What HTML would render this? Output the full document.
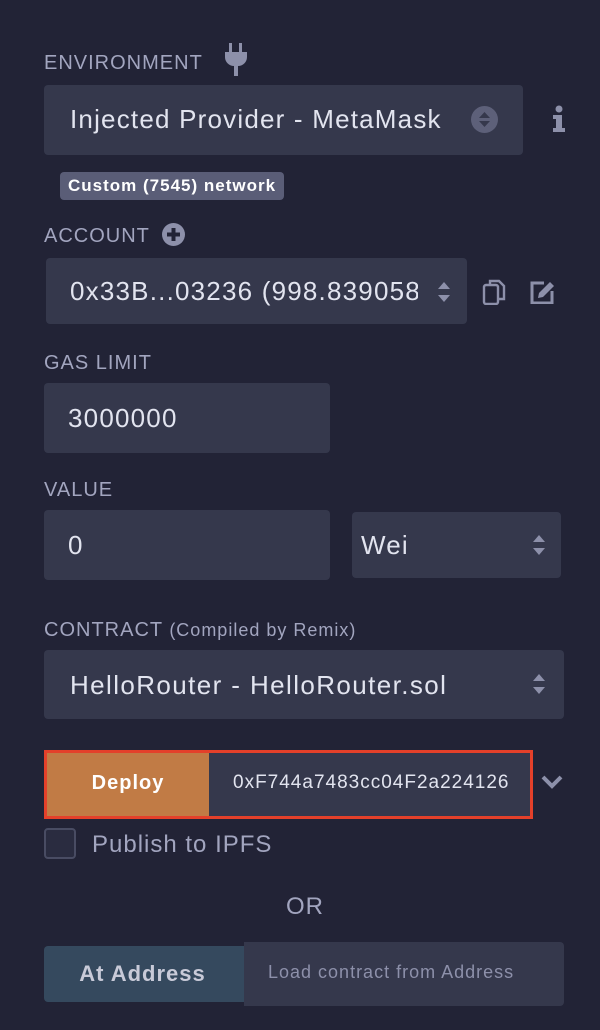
<!DOCTYPE html>
<html><head><style>
*{box-sizing:border-box;margin:0;padding:0}
body{width:600px;height:1030px;background:#222336;font-family:"Liberation Sans",sans-serif;position:relative;overflow:hidden;letter-spacing:1px}
.a{position:absolute}
.lbl{color:#a2a5bf;font-size:20px;}
.box{background:#35384c;border-radius:4px;color:#e2e4ef}
.txt{font-size:26px;color:#e2e4ef;letter-spacing:1.2px}
</style></head><body>
<div class="a lbl" style="left:44px;top:52px">ENVIRONMENT</div>
<svg class="a" style="left:224px;top:43px" width="24" height="33" viewBox="0 0 24 33"><rect x="5" y="0" width="3" height="10" fill="#8d90aa"/><rect x="15" y="0" width="3" height="10" fill="#8d90aa"/><path d="M1 9h22v5a9 9 0 0 1-9 9h-4a9 9 0 0 1-9-9z" fill="#8d90aa"/><rect x="10" y="22" width="4" height="11" fill="#8d90aa"/></svg>
<div class="a box" style="left:44px;top:85px;width:479px;height:70px"></div>
<div class="a txt" style="left:70px;top:104px">Injected Provider - MetaMask</div>
<svg class="a" style="left:471px;top:106px" width="27" height="27" viewBox="0 0 27 27"><circle cx="13.5" cy="13.5" r="13.5" fill="#5d6079"/><path d="M8 12l5.5-6 5.5 6zM8 15l5.5 6 5.5-6z" fill="#35384c"/></svg>
<svg class="a" style="left:552px;top:105px" width="14" height="27" viewBox="0 0 14 27"><circle cx="7" cy="4" r="3.5" fill="#8d90aa"/><path d="M1 10h9v13h3v4H1v-4h3v-9H1z" fill="#8d90aa"/></svg>
<div class="a" style="left:60px;top:172px;width:224px;height:28px;background:#5a5d77;border-radius:4px;color:#fff;font-weight:bold;font-size:17px;line-height:28px;padding-left:8px;white-space:nowrap">Custom (7545) network</div>
<div class="a lbl" style="left:44px;top:225px">ACCOUNT</div>
<svg class="a" style="left:162px;top:223px" width="23" height="23" viewBox="0 0 23 23"><circle cx="11.5" cy="11.5" r="11.5" fill="#8d90aa"/><path d="M9.5 5h4v4.5H18v4h-4.5V18h-4v-4.5H5v-4h4.5z" fill="#222336"/></svg>
<div class="a box" style="left:46px;top:258px;width:421px;height:66px;overflow:hidden"><div class="txt" style="position:absolute;left:24px;top:18px;white-space:nowrap;width:348px;overflow:hidden">0x33B...03236 (998.839058</div></div>
<svg class="a" style="left:437px;top:280px" width="14" height="24" viewBox="0 0 14 24"><path d="M1 9l6-7 6 7zM1 15l6 7 6-7z" fill="#8d90aa"/></svg>
<svg class="a" style="left:482px;top:279px" width="24" height="26" viewBox="0 0 24 26" fill="none" stroke="#8d90aa" stroke-width="2.4"><path d="M8 6V2h9l5 5v13h-6"/><rect x="2" y="6" width="14" height="19" rx="2"/></svg>
<svg class="a" style="left:529px;top:279px" width="28" height="25" viewBox="0 0 28 25"><path d="M15 4H3v20h20V12" fill="none" stroke="#8d90aa" stroke-width="3"/><path d="M10 14l11-11 4 4-11 11-5 1z" fill="#8d90aa"/></svg>
<div class="a lbl" style="left:44px;top:352px">GAS LIMIT</div>
<div class="a box" style="left:44px;top:383px;width:286px;height:70px"></div>
<div class="a txt" style="left:68px;top:403px">3000000</div>
<div class="a lbl" style="left:44px;top:479px">VALUE</div>
<div class="a box" style="left:44px;top:510px;width:286px;height:70px"></div>
<div class="a txt" style="left:68px;top:530px">0</div>
<div class="a box" style="left:352px;top:512px;width:209px;height:66px"></div>
<div class="a txt" style="left:361px;top:530px">Wei</div>
<svg class="a" style="left:532px;top:533px" width="14" height="24" viewBox="0 0 14 24"><path d="M1 9l6-7 6 7zM1 15l6 7 6-7z" fill="#8d90aa"/></svg>
<div class="a lbl" style="left:44px;top:619px">CONTRACT <span style="font-size:18px">(Compiled by Remix)</span></div>
<div class="a box" style="left:44px;top:650px;width:520px;height:69px"></div>
<div class="a txt" style="left:70px;top:670px;letter-spacing:1.4px">HelloRouter - HelloRouter.sol</div>
<svg class="a" style="left:532px;top:672px" width="14" height="24" viewBox="0 0 14 24"><path d="M1 9l6-7 6 7zM1 15l6 7 6-7z" fill="#8d90aa"/></svg>
<div class="a" style="left:44px;top:750px;width:489px;height:69px;border:3px solid #e4402a;background:#35384c"></div>
<div class="a" style="left:47px;top:753px;width:162px;height:63px;background:#c17b45;color:#fff;font-weight:bold;font-size:20px;line-height:60px;text-align:center">Deploy</div>
<div class="a" style="left:233px;top:772px;font-size:19px;color:#e2e4ef">0xF744a7483cc04F2a224126</div>
<svg class="a" style="left:541px;top:775px" width="22" height="14" viewBox="0 0 22 14"><path d="M2 2l9 9 9-9" fill="none" stroke="#8d90aa" stroke-width="4"/></svg>
<div class="a" style="left:44px;top:828px;width:32px;height:31px;border:2px solid #494c63;border-radius:4px;background:#2a2c40"></div>
<div class="a" style="left:92px;top:831px;font-size:24px;color:#a2a5bf">Publish to IPFS</div>
<div class="a" style="left:286px;top:893px;font-size:24px;color:#a2a5bf">OR</div>
<div class="a" style="left:44px;top:946px;width:205px;height:56px;background:#35495e;border-radius:4px 0 0 4px;color:#c8cad8;font-weight:bold;font-size:22px;line-height:56px;text-align:center;padding-right:8px">At Address</div>
<div class="a box" style="left:244px;top:942px;width:320px;height:64px;border-radius:0 4px 4px 0"></div>
<div class="a" style="left:268px;top:962px;font-size:18px;color:#8d90aa">Load contract from Address</div>
</body></html>
